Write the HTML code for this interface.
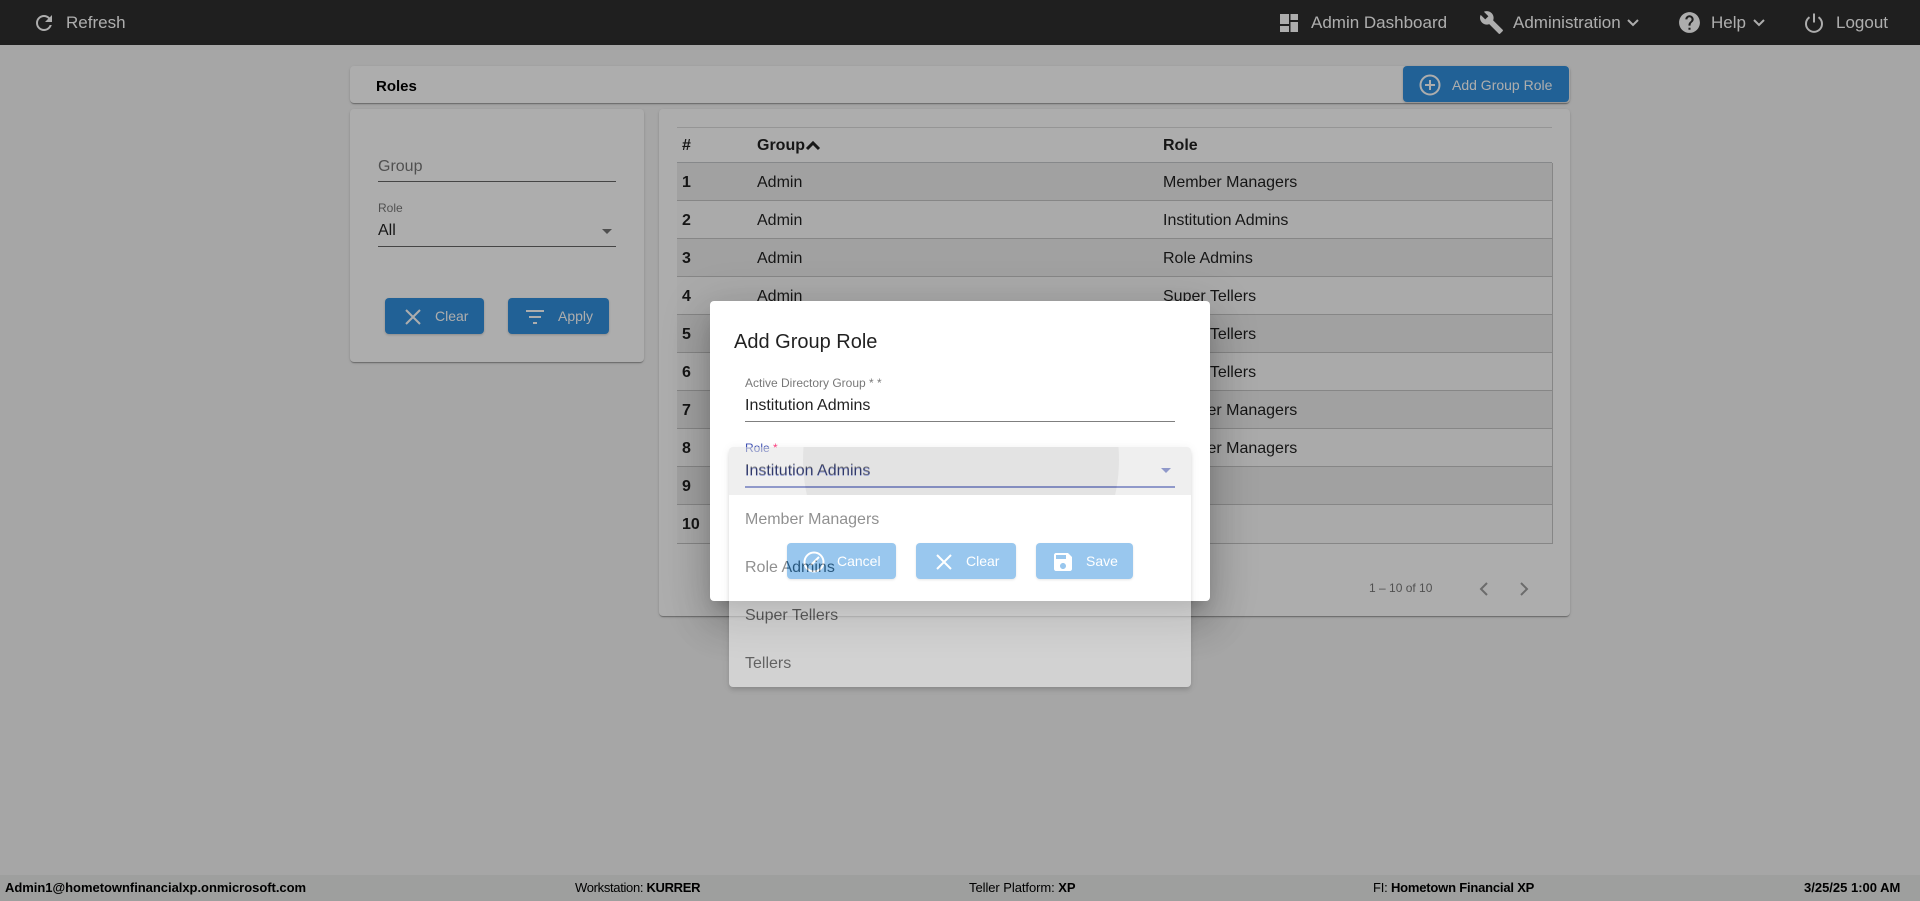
<!DOCTYPE html>
<html>
<head>
<meta charset="utf-8">
<title>Roles</title>
<style>
html,body{margin:0;padding:0;width:1920px;height:901px;overflow:hidden;background:#f5f5f5;font-family:"Liberation Sans",Arial,sans-serif;color:rgba(0,0,0,.87)}
*{box-sizing:border-box}
.a{position:absolute;white-space:nowrap}
.hd{position:absolute;left:0;top:0;width:1920px;height:45px;background:#2e2e2e}
.nav{position:absolute;top:11px;font-size:17px;line-height:24px;color:#fff;white-space:nowrap}
.card{position:absolute;background:#fff;border-radius:4px;box-shadow:0 2px 1px -1px rgba(0,0,0,.2),0 1px 1px 0 rgba(0,0,0,.14),0 1px 3px 0 rgba(0,0,0,.12)}
.btn{position:absolute;background:#3290dd;color:#fff;border-radius:4px;font-size:14px;line-height:36px;box-shadow:0 1px 2px rgba(0,0,0,.2)}
.btn span{position:absolute;top:0;white-space:nowrap}
.btn svg{position:absolute}
.row{position:absolute;left:677px;width:876px;height:38px;border-bottom:1px solid #c6c6c6;border-right:1px solid #c6c6c6;font-size:16px;line-height:39px}
.row.o{background:#eee}
.row.e{background:#fbfbfb}
.row b,.row i,.row u{position:absolute;top:0;font-style:normal;text-decoration:none;white-space:nowrap}
.row b{left:5px}.row i{left:80px}.row u{left:486px}
.opt{position:absolute;left:0;width:462px;height:48px;padding-left:16px;font-size:16px;line-height:50px;color:rgba(0,0,0,.87)}
.ft{position:absolute;top:880px;font-size:13px;line-height:16px;color:#000;white-space:nowrap}
</style>
</head>
<body>
<div class="hd"></div>
<svg class="a" style="left:32px;top:11px" width="24" height="24" viewBox="0 0 24 24" fill="#fff"><path d="M17.65 6.35C16.2 4.9 14.21 4 12 4c-4.42 0-7.99 3.58-7.99 8s3.57 8 7.99 8c3.73 0 6.84-2.55 7.73-6h-2.08c-.82 2.33-3.04 4-5.65 4-3.31 0-6-2.69-6-6s2.69-6 6-6c1.66 0 3.14.69 4.22 1.78L13 11h7V4l-2.35 2.35z"/></svg>
<div class="nav" style="left:66px">Refresh</div>
<svg class="a" style="left:1277px;top:11px" width="24" height="24" viewBox="0 0 24 24" fill="#fff"><path d="M3 13h9V3H3v10zm0 8h9v-6H3v6zm10.500 0h7.500V11h-7.500v10zm0-18v6h7.500V3h-7.500z"/></svg>
<div class="nav" style="left:1311px">Admin Dashboard</div>
<svg class="a" style="left:1479px;top:10px" width="25" height="25" viewBox="0 0 24 24" fill="#fff"><path d="M22.700 19l-9.100-9.100c.9-2.300.4-5-1.500-6.900-2-2-5-2.400-7.400-1.300L9 6 6 9 1.600 4.700C.4 7.100.9 10.100 2.900 12.100c1.900 1.900 4.600 2.400 6.900 1.500l9.100 9.100c.4.4 1 .4 1.400 0l2.300-2.300c.5-.4.5-1.100.1-1.400z"/></svg>
<div class="nav" style="left:1513px">Administration</div>
<svg class="a" style="left:1626px;top:18px" width="14" height="10" viewBox="0 0 14 10" fill="none" stroke="#fff" stroke-width="2"><path d="M2 2l5 5 5-5"/></svg>
<svg class="a" style="left:1677px;top:10px" width="25" height="25" viewBox="0 0 24 24" fill="#fff"><path d="M12 2C6.480 2 2 6.480 2 12s4.480 10 10 10 10-4.480 10-10S17.520 2 12 2zm1 17h-2v-2h2v2zm2.070-7.750l-.9.920C13.450 12.900 13 13.500 13 15h-2v-.5c0-1.100.45-2.100 1.170-2.830l1.240-1.260c.37-.36.59-.86.59-1.410 0-1.100-.9-2-2-2s-2 .9-2 2H8c0-2.210 1.790-4 4-4s4 1.790 4 4c0 .88-.36 1.680-.93 2.250z"/></svg>
<div class="nav" style="left:1711px">Help</div>
<svg class="a" style="left:1752px;top:18px" width="14" height="10" viewBox="0 0 14 10" fill="none" stroke="#fff" stroke-width="2"><path d="M2 2l5 5 5-5"/></svg>
<svg class="a" style="left:1802px;top:10px" width="24" height="24" viewBox="0 0 24 24" fill="none" stroke="#fff" stroke-width="2"><path d="M7.500 7.200a8 8 0 1 0 9 0"/><path d="M12 3.500v9"/></svg>
<div class="nav" style="left:1836px">Logout</div>

<div class="card" style="left:350px;top:66px;width:1220px;height:37px"></div>
<div class="a" style="left:376px;top:77px;font-size:15px;line-height:20px;font-weight:bold;color:#000">Roles</div>
<div class="btn" style="left:1403px;top:66px;width:166px;height:36px">
<svg style="left:15px;top:7px" width="24" height="24" viewBox="0 0 24 24" fill="none" stroke="#fff" stroke-width="2"><circle cx="12" cy="12" r="9.500"/><path d="M12 7v10M7 12h10"/></svg>
<span style="left:49px;top:1px">Add Group Role</span></div>

<div class="card" style="left:350px;top:109px;width:294px;height:253px"></div>
<div class="a" style="left:378px;top:157px;font-size:16px;line-height:20px;color:rgba(0,0,0,.54)">Group</div>
<div class="a" style="left:378px;top:181px;width:238px;height:1px;background:rgba(0,0,0,.6)"></div>
<div class="a" style="left:378px;top:201px;font-size:12px;line-height:14px;color:rgba(0,0,0,.54)">Role</div>
<div class="a" style="left:378px;top:221px;font-size:16px;line-height:20px">All</div>
<div class="a" style="left:602px;top:229px;width:0;height:0;border-left:5px solid transparent;border-right:5px solid transparent;border-top:5px solid rgba(0,0,0,.54)"></div>
<div class="a" style="left:378px;top:246px;width:238px;height:1px;background:rgba(0,0,0,.6)"></div>
<div class="btn" style="left:385px;top:298px;width:99px;height:36px">
<svg style="left:18px;top:9px" width="20" height="20" viewBox="0 0 20 20" fill="none" stroke="#fff" stroke-width="2"><path d="M3 3l14 14M17 3L3 17"/></svg>
<span style="left:50px">Clear</span></div>
<div class="btn" style="left:508px;top:298px;width:101px;height:36px">
<svg style="left:17px;top:9px" width="20" height="20" viewBox="0 0 20 20" fill="#fff"><path d="M1 3h18v2H1zM4 9h12v2H4zM8 15h4v2H8z"/></svg>
<span style="left:50px">Apply</span></div>

<div class="card" style="left:659px;top:109px;width:911px;height:507px"></div>
<div class="a" style="left:677px;top:127px;width:875px;height:1px;background:#dcdcdc"></div>
<div class="a" style="left:682px;top:136px;font-size:16px;line-height:20px;font-weight:bold">#</div>
<div class="a" style="left:757px;top:136px;font-size:16px;line-height:20px;font-weight:bold">Group</div>
<svg class="a" style="left:805px;top:139px" width="16" height="12" viewBox="0 0 16 12" fill="none" stroke="#222" stroke-width="3"><path d="M2 10l6-6 6 6"/></svg>
<div class="a" style="left:1163px;top:136px;font-size:16px;line-height:20px;font-weight:bold">Role</div>
<div class="a" style="left:677px;top:162px;width:875px;height:1px;background:#c6c9cc"></div>
<div class="row o" style="top:163px"><b>1</b><i>Admin</i><u>Member Managers</u></div>
<div class="row e" style="top:201px"><b>2</b><i>Admin</i><u>Institution Admins</u></div>
<div class="row o" style="top:239px"><b>3</b><i>Admin</i><u>Role Admins</u></div>
<div class="row e" style="top:277px"><b>4</b><i>Admin</i><u>Super Tellers</u></div>
<div class="row o" style="top:315px"><b>5</b><i>Admin</i><u>Super Tellers</u></div>
<div class="row e" style="top:353px"><b>6</b><i>Admin</i><u>Super Tellers</u></div>
<div class="row o" style="top:391px"><b>7</b><i>Admin</i><u>Member Managers</u></div>
<div class="row e" style="top:429px"><b>8</b><i>Admin</i><u>Member Managers</u></div>
<div class="row o" style="top:467px"><b>9</b><i>Admin</i><u></u></div>
<div class="row e" style="top:505px;height:39px"><b>10</b><i>Admin</i><u></u></div>
<div class="a" style="left:1369px;top:581px;font-size:12px;line-height:14px;color:rgba(0,0,0,.54)">1 – 10 of 10</div>
<svg class="a" style="left:1476px;top:580px" width="14" height="18" viewBox="0 0 14 18" fill="none" stroke="rgba(0,0,0,.38)" stroke-width="2"><path d="M11 3L5 9l6 6"/></svg>
<svg class="a" style="left:1518px;top:580px" width="14" height="18" viewBox="0 0 14 18" fill="none" stroke="rgba(0,0,0,.38)" stroke-width="2"><path d="M3 3l6 6-6 6"/></svg>

<div class="a" style="left:0;top:875px;width:1920px;height:26px;background:#e9ebe9"></div>
<div class="ft" style="left:5px;font-weight:bold;letter-spacing:-.03px">Admin1@hometownfinancialxp.onmicrosoft.com</div>
<div class="ft" style="left:575px;letter-spacing:-.32px">Workstation: <b>KURRER</b></div>
<div class="ft" style="left:969px;letter-spacing:-.06px">Teller Platform: <b>XP</b></div>
<div class="ft" style="left:1373px;letter-spacing:-.2px">FI: <b>Hometown Financial XP</b></div>
<div class="ft" style="left:1804px;font-weight:bold">3/25/25 1:00 AM</div>

<div class="a" style="left:0;top:0;width:1920px;height:901px;background:rgba(0,0,0,.32)"></div>

<div class="a" style="left:710px;top:301px;width:500px;height:300px;background:#fff;border-radius:4px;box-shadow:0 11px 15px -7px rgba(0,0,0,.2),0 24px 38px 3px rgba(0,0,0,.14),0 9px 46px 8px rgba(0,0,0,.12)"></div>
<div class="a" style="left:734px;top:330px;font-size:20px;line-height:24px">Add Group Role</div>
<div class="a" style="left:745px;top:376px;font-size:12px;line-height:14px;color:rgba(0,0,0,.54)">Active Directory Group * *</div>
<div class="a" style="left:745px;top:396px;font-size:16px;line-height:20px">Institution Admins</div>
<div class="a" style="left:745px;top:421px;width:430px;height:1px;background:rgba(0,0,0,.5)"></div>
<div class="a" style="left:745px;top:441px;font-size:12px;line-height:14px;color:#3f51b5">Role <span style="color:#ff4081">*</span></div>
<div class="a" style="left:745px;top:461px;font-size:16px;line-height:20px;color:rgba(0,0,0,.87)">Institution Admins</div>
<div class="a" style="left:1161px;top:468px;width:0;height:0;border-left:5px solid transparent;border-right:5px solid transparent;border-top:5px solid #3f51b5"></div>
<div class="a" style="left:745px;top:486px;width:430px;height:2px;background:#3f51b5"></div>
<div class="btn" style="left:787px;top:543px;width:109px;height:36px">
<svg style="left:16px;top:8px" width="22" height="22" viewBox="0 0 22 22" fill="none" stroke="#fff" stroke-width="2"><circle cx="11" cy="11" r="9.500"/><path d="M16 6L8 14"/></svg>
<span style="left:50px">Cancel</span></div>
<div class="btn" style="left:916px;top:543px;width:100px;height:36px">
<svg style="left:18px;top:9px" width="20" height="20" viewBox="0 0 20 20" fill="none" stroke="#fff" stroke-width="2"><path d="M3 3l14 14M17 3L3 17"/></svg>
<span style="left:50px">Clear</span></div>
<div class="btn" style="left:1036px;top:543px;width:97px;height:36px">
<svg style="left:15px;top:7px" width="24" height="24" viewBox="0 0 24 24" fill="#fff"><path d="M17 3H5c-1.110 0-2 .9-2 2v14c0 1.100.89 2 2 2h14c1.100 0 2-.9 2-2V7l-4-4zm-5 16c-1.660 0-3-1.340-3-3s1.340-3 3-3 3 1.340 3 3-1.340 3-3 3zm3-10H5V5h10v4z"/></svg>
<span style="left:50px">Save</span></div>

<div class="a" style="left:729px;top:447px;width:462px;height:240px;background:#fff;border-radius:4px;overflow:hidden;opacity:.5;box-shadow:0 2px 4px -1px rgba(0,0,0,.2),0 4px 5px 0 rgba(0,0,0,.14),0 1px 10px 0 rgba(0,0,0,.12)">
<div class="opt" style="top:0;background:rgba(0,0,0,.12);overflow:hidden;color:#3f51b5"><div style="position:absolute;left:74px;top:-145px;width:316px;height:316px;border-radius:50%;background:rgba(0,0,0,.1)"></div><span style="position:relative">Institution Admins</span></div>
<div class="opt" style="top:48px">Member Managers</div>
<div class="opt" style="top:96px">Role Admins</div>
<div class="opt" style="top:144px">Super Tellers</div>
<div class="opt" style="top:192px">Tellers</div>
</div>
</body>
</html>
